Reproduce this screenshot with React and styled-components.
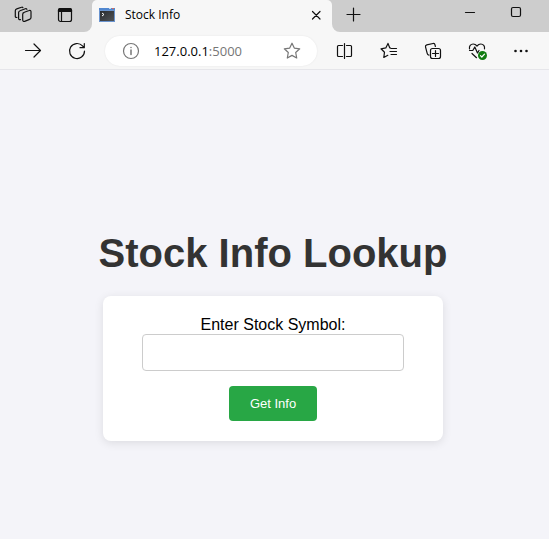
import React from "react";
import styled, { createGlobalStyle } from "styled-components";

const GlobalStyle = createGlobalStyle`
  * { box-sizing: border-box; }
  body { margin: 0; background: #f4f4f9; font-family: "Liberation Sans", Arial, sans-serif; }
`;

const Window = styled.div`
  display: flex;
  flex-direction: column;
  min-height: 100vh;
`;

const TabStrip = styled.header`
  display: flex;
  height: 32px;
  background: #f7f7f7;
`;

const StripStart = styled.div`
  display: flex;
  width: 92px;
  padding: 0 6px 2px 2px;
  background: #cdcdcd;
  border-bottom-right-radius: 8px;
`;

const StripEnd = styled.div`
  display: flex;
  flex: 1;
  padding-right: 10px;
  background: #cdcdcd;
  border-bottom-left-radius: 8px;
`;

const TabSlot = styled.div`
  width: 240px;
  background: linear-gradient(#cdcdcd 8px, #f7f7f7 8px);
`;

const Tab = styled.div`
  display: flex;
  align-items: center;
  height: 100%;
  padding: 0 4px 2px 7px;
  background: #f7f7f7;
  border-radius: 5px 5px 0 0;
`;

const TabTitle = styled.span`
  flex: 1;
  margin-left: 10px;
  font: 12px/20px "Open Sans", sans-serif;
  color: #000;
`;

const IconButton = styled.button`
  display: flex;
  flex: none;
  align-items: center;
  justify-content: center;
  width: ${(p) => p.$width || 44}px;
  height: ${(p) => p.$height || 30}px;
  padding: 0;
  border: 0;
  background: transparent;
  color: ${(p) => p.$color || "#111"};
`;

const Glyph = styled.svg`
  display: block;
  flex: none;
  width: 24px;
  height: 24px;
  fill: none;
  stroke: currentColor;
  stroke-width: 1.2;
  stroke-linecap: round;
  stroke-linejoin: round;
`;

const Favicon = styled.svg`
  flex: none;
  width: 16px;
  height: 16px;
`;

const WindowControls = styled.div`
  display: flex;
  margin-left: auto;
`;

const Toolbar = styled.nav`
  display: flex;
  align-items: center;
  height: 38px;
  padding: 0 6px 0 11px;
  background: #f7f7f7;
  border-bottom: 1px solid #e6e6ea;
`;

const AddressBar = styled.div`
  display: flex;
  flex: 1;
  align-items: center;
  min-width: 0;
  height: 30px;
  margin: 0 6px;
  padding: 0 8px;
  background: #fff;
  border-radius: 15px;
  box-shadow: 0 0 2px rgba(0, 0, 0, 0.08);
`;

const Address = styled.span`
  flex: 1;
  margin-left: 5px;
  font: 13px/20px "Open Sans", sans-serif;
  color: #000;
`;

const Port = styled.span`
  color: #767676;
`;

const Page = styled.main`
  display: flex;
  flex: 1;
  flex-direction: column;
  align-items: center;
  justify-content: center;
  padding: 62px 3px 0 0;
`;

const Title = styled.h1`
  margin: 0 0 20px;
  font-size: 40px;
  line-height: 46px;
  color: #333;
`;

const LookupForm = styled.form`
  display: flex;
  flex-direction: column;
  align-items: center;
  width: 340px;
  max-width: 100%;
  padding: 20px;
  background: #fff;
  border-radius: 8px;
  box-shadow: 0 2px 10px rgba(0, 0, 0, 0.1);
`;

const Label = styled.label`
  font-size: 16px;
  line-height: 18px;
  color: #000;
`;

const SymbolInput = styled.input`
  width: 262px;
  max-width: 100%;
  height: 37px;
  margin-bottom: 15px;
  padding: 10px;
  border: 1px solid #ccc;
  border-radius: 4px;
  background: #fff;
`;

const SubmitButton = styled.button`
  height: 35px;
  padding: 0 21px;
  border: 0;
  border-radius: 4px;
  background: #28a745;
  font: 13px/15px "Liberation Sans", Arial, sans-serif;
  color: #fff;
`;

const WorkspacesIcon = () => (
  <Glyph viewBox="0 0 24 24">
    <path d="M13.3 9.3l4.9-1.8a1.3 1.3 0 0 1 1.8 1.2v5.8a2 2 0 0 1-1.4 1.9l-5 2a1.4 1.4 0 0 1-1.9-1.3v-5.9a2 2 0 0 1 1.6-1.9z" />
    <path d="M9.5 16.6l-.7.1a1.2 1.2 0 0 1-1.2-1.3V9.6a2 2 0 0 1 1.4-1.9l5.3-2a1.3 1.3 0 0 1 1.6.6" />
    <path d="M5.9 14.4l-.5.1a1.2 1.2 0 0 1-1.1-1.3V7.8a2 2 0 0 1 1.4-1.9l4.8-1.7a1.2 1.2 0 0 1 1.4.4" />
  </Glyph>
);

const TabActionsIcon = () => (
  <Glyph viewBox="0 0 24 24">
    <rect x="5.5" y="5.5" width="13" height="13" rx="2" />
    <path d="M5.5 8.5V7A1.5 1.5 0 0 1 7 5.5h10A1.5 1.5 0 0 1 18.5 7v1.5z" fill="currentColor" />
    <path d="M8.5 9v9.5" />
  </Glyph>
);

const ConsoleIcon = () => (
  <Favicon viewBox="0 0 16 16" aria-hidden="true">
    <defs>
      <linearGradient id="screen" x1="0" y1="0" x2="1" y2="1">
        <stop offset="0" stopColor="#292b2e" />
        <stop offset="1" stopColor="#505357" />
      </linearGradient>
    </defs>
    <rect y="1" width="16" height="14" fill="#6a94cf" />
    <rect y="1" width="16" height="2" fill="#5288d0" />
    <rect x="10" y="1" width="2" height="1" fill="#c4d8f0" />
    <rect x="13" y="1" width="2" height="1" fill="#d66b5c" />
    <rect x="1" y="4" width="14" height="10" fill="url(#screen)" />
    <path d="M3 6l2 1.5L3 9" fill="none" stroke="#fff" />
  </Favicon>
);

export default function App() {
  return (
    <Window>
      <GlobalStyle />
      <TabStrip>
        <StripStart>
          <IconButton $width={42} aria-label="Workspaces"><WorkspacesIcon /></IconButton>
          <IconButton $width={42} aria-label="Tab actions menu"><TabActionsIcon /></IconButton>
        </StripStart>
        <TabSlot>
          <Tab>
            <ConsoleIcon />
            <TabTitle>Stock Info</TabTitle>
            <IconButton $width={24} aria-label="Close tab">
              <Glyph viewBox="0 0 24 24"><path d="M8.5 8.5l7.5 7.5m0-7.5l-7.5 7.5" /></Glyph>
            </IconButton>
          </Tab>
        </TabSlot>
        <StripEnd>
          <IconButton $width={43} aria-label="New tab">
            <Glyph viewBox="0 0 24 24"><path d="M5 11.5h13M11.5 5v13" /></Glyph>
          </IconButton>
          <WindowControls>
            <IconButton $width={46} $height={24} aria-label="Minimize">
              <Glyph viewBox="0 0 24 24"><path d="M7.5 12.5h9" /></Glyph>
            </IconButton>
            <IconButton $width={46} $height={24} aria-label="Maximize">
              <Glyph viewBox="0 0 24 24"><rect x="7.5" y="7.5" width="9" height="9" rx="1.5" /></Glyph>
            </IconButton>
          </WindowControls>
        </StripEnd>
      </TabStrip>
      <Toolbar>
        <IconButton aria-label="Forward">
          <Glyph viewBox="0 0 24 24"><path d="M4.5 11.5h15M13 5l6.5 6.5L13 18" /></Glyph>
        </IconButton>
        <IconButton aria-label="Refresh">
          <Glyph viewBox="0 0 24 24"><path d="M19.5 12a7.5 7.5 0 1 1-2-5.1l1.5 1.6M19.3 4.5v4.2h-4.3" /></Glyph>
        </IconButton>
        <AddressBar>
          <IconButton $width={36} $color="#767676" aria-label="View site information">
            <Glyph viewBox="0 0 24 24">
              <circle cx="12" cy="12" r="7.5" /><path d="M12 11v4.5M12 8.4v.2" strokeWidth="1.5" />
            </Glyph>
          </IconButton>
          <Address>127.0.0.1<Port>:5000</Port></Address>
          <IconButton $width={34} $color="#767676" aria-label="Add to favorites">
            <Glyph viewBox="0 0 24 24"><path d="M12 4.2l2.3 4.9 5.4.7-4 3.7 1 5.5-4.7-2.6L7.3 19l1-5.5-4-3.7 5.4-.7z" /></Glyph>
          </IconButton>
        </AddressBar>
        <IconButton aria-label="Split screen">
          <Glyph viewBox="0 0 24 24">
            <path d="M9.5 6.5h-4a1 1 0 0 0-1 1v9a1 1 0 0 0 1 1h4M13.5 6.5h4a1 1 0 0 1 1 1v9a1 1 0 0 1-1 1h-4M11.5 4.5v15" />
          </Glyph>
        </IconButton>
        <IconButton aria-label="Favorites">
          <Glyph viewBox="0 0 24 24">
            <path d="M13.5 9l-.8-.2-1.7-4.4-2.2 4.5-4.8.9 3.5 3.4-.7 5.3 4-2.2M14 9.5h5.5M13 12.5h6.5M14 15.5h5.5" />
          </Glyph>
        </IconButton>
        <IconButton aria-label="Collections">
          <Glyph viewBox="0 0 24 24">
            <path d="M8 16.2c-1-.2-1.6-.8-1.8-1.9L4.5 7.8c-.2-1 .3-1.8 1.3-2l6.2-1.3c1-.2 1.8.3 2 1.3l.4 1.7" />
            <rect x="9.5" y="9.5" width="10" height="10" rx="2" />
            <path d="M14.5 11.5v6M11.5 14.5h6" />
          </Glyph>
        </IconButton>
        <IconButton aria-label="Browser essentials">
          <Glyph viewBox="0 0 24 24">
            <path d="M4.5 9.8C4 7.200 5.700 5 8.200 5c1.600 0 2.800.8 3.800 2 1-1.200 2.200-2 3.800-2 2.500 0 4.200 2.200 3.700 4.800M4.500 11.500h3.300l2-3.500 2.700 6 1.500-2.500M7 14.500l4.500 4.200" />
            <circle cx="17.5" cy="16.5" r="4.5" fill="#107c10" stroke="none" />
            <path d="M15.5 16.7l1.3 1.3 2.7-2.900" stroke="#fff" />
          </Glyph>
        </IconButton>
        <IconButton aria-label="Settings and more">
          <Glyph viewBox="0 0 24 24">
            <g fill="currentColor" stroke="none">
              <circle cx="6.5" cy="12" r="1.3" /><circle cx="12" cy="12" r="1.3" /><circle cx="17.5" cy="12" r="1.3" />
            </g>
          </Glyph>
        </IconButton>
      </Toolbar>
      <Page>
        <Title>Stock Info Lookup</Title>
        <LookupForm onSubmit={(e) => e.preventDefault()}>
          <Label htmlFor="symbol">Enter Stock Symbol:</Label>
          <SymbolInput id="symbol" name="symbol" type="text" required />
          <SubmitButton type="submit">Get Info</SubmitButton>
        </LookupForm>
      </Page>
    </Window>
  );
}
